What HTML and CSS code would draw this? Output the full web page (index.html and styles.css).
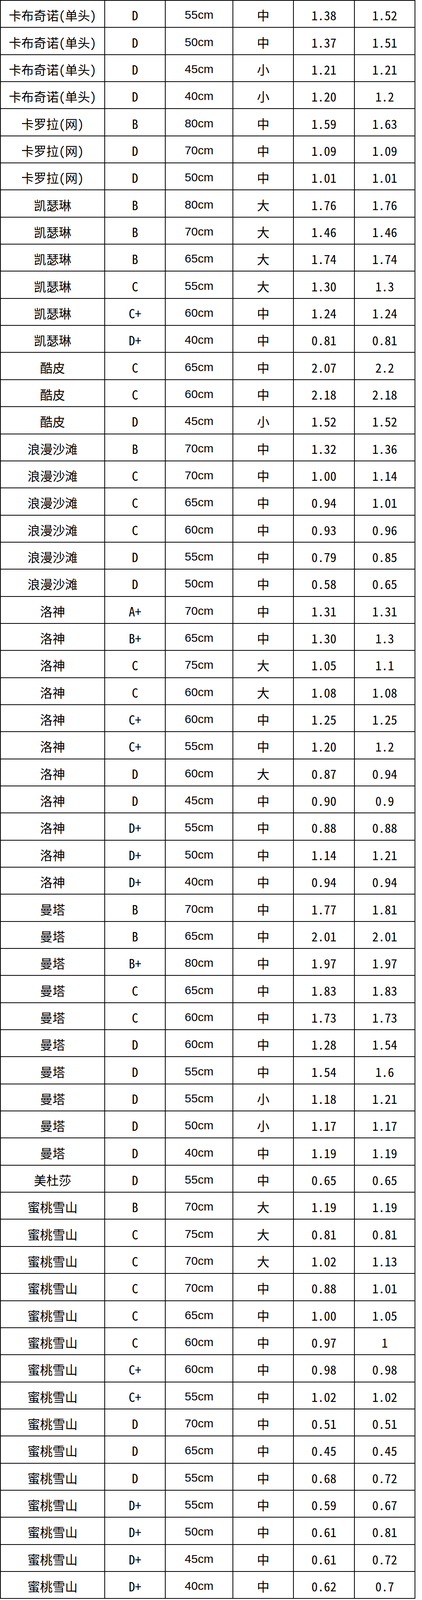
FILE: index.html
```html
<!DOCTYPE html>
<html lang="zh-CN">
<head>
<meta charset="utf-8">
<title>价格表</title>
<link rel="stylesheet" href="styles.css">
</head>
<body>
<div class="sheet" role="table">
<div class="cell">卡布奇诺(单头)</div><div class="cell">D</div><div class="cell len">55cm</div><div class="cell">中</div><div class="cell">1.38</div><div class="cell">1.52</div>
<div class="cell">卡布奇诺(单头)</div><div class="cell">D</div><div class="cell len">50cm</div><div class="cell">中</div><div class="cell">1.37</div><div class="cell">1.51</div>
<div class="cell">卡布奇诺(单头)</div><div class="cell">D</div><div class="cell len">45cm</div><div class="cell">小</div><div class="cell">1.21</div><div class="cell">1.21</div>
<div class="cell">卡布奇诺(单头)</div><div class="cell">D</div><div class="cell len">40cm</div><div class="cell">小</div><div class="cell">1.20</div><div class="cell">1.2</div>
<div class="cell">卡罗拉(网)</div><div class="cell">B</div><div class="cell len">80cm</div><div class="cell">中</div><div class="cell">1.59</div><div class="cell">1.63</div>
<div class="cell">卡罗拉(网)</div><div class="cell">D</div><div class="cell len">70cm</div><div class="cell">中</div><div class="cell">1.09</div><div class="cell">1.09</div>
<div class="cell">卡罗拉(网)</div><div class="cell">D</div><div class="cell len">50cm</div><div class="cell">中</div><div class="cell">1.01</div><div class="cell">1.01</div>
<div class="cell">凯瑟琳</div><div class="cell">B</div><div class="cell len">80cm</div><div class="cell">大</div><div class="cell">1.76</div><div class="cell">1.76</div>
<div class="cell">凯瑟琳</div><div class="cell">B</div><div class="cell len">70cm</div><div class="cell">大</div><div class="cell">1.46</div><div class="cell">1.46</div>
<div class="cell">凯瑟琳</div><div class="cell">B</div><div class="cell len">65cm</div><div class="cell">大</div><div class="cell">1.74</div><div class="cell">1.74</div>
<div class="cell">凯瑟琳</div><div class="cell">C</div><div class="cell len">55cm</div><div class="cell">大</div><div class="cell">1.30</div><div class="cell">1.3</div>
<div class="cell">凯瑟琳</div><div class="cell">C+</div><div class="cell len">60cm</div><div class="cell">中</div><div class="cell">1.24</div><div class="cell">1.24</div>
<div class="cell">凯瑟琳</div><div class="cell">D+</div><div class="cell len">40cm</div><div class="cell">中</div><div class="cell">0.81</div><div class="cell">0.81</div>
<div class="cell">酷皮</div><div class="cell">C</div><div class="cell len">65cm</div><div class="cell">中</div><div class="cell">2.07</div><div class="cell">2.2</div>
<div class="cell">酷皮</div><div class="cell">C</div><div class="cell len">60cm</div><div class="cell">中</div><div class="cell">2.18</div><div class="cell">2.18</div>
<div class="cell">酷皮</div><div class="cell">D</div><div class="cell len">45cm</div><div class="cell">小</div><div class="cell">1.52</div><div class="cell">1.52</div>
<div class="cell">浪漫沙滩</div><div class="cell">B</div><div class="cell len">70cm</div><div class="cell">中</div><div class="cell">1.32</div><div class="cell">1.36</div>
<div class="cell">浪漫沙滩</div><div class="cell">C</div><div class="cell len">70cm</div><div class="cell">中</div><div class="cell">1.00</div><div class="cell">1.14</div>
<div class="cell">浪漫沙滩</div><div class="cell">C</div><div class="cell len">65cm</div><div class="cell">中</div><div class="cell">0.94</div><div class="cell">1.01</div>
<div class="cell">浪漫沙滩</div><div class="cell">C</div><div class="cell len">60cm</div><div class="cell">中</div><div class="cell">0.93</div><div class="cell">0.96</div>
<div class="cell">浪漫沙滩</div><div class="cell">D</div><div class="cell len">55cm</div><div class="cell">中</div><div class="cell">0.79</div><div class="cell">0.85</div>
<div class="cell">浪漫沙滩</div><div class="cell">D</div><div class="cell len">50cm</div><div class="cell">中</div><div class="cell">0.58</div><div class="cell">0.65</div>
<div class="cell">洛神</div><div class="cell">A+</div><div class="cell len">70cm</div><div class="cell">中</div><div class="cell">1.31</div><div class="cell">1.31</div>
<div class="cell">洛神</div><div class="cell">B+</div><div class="cell len">65cm</div><div class="cell">中</div><div class="cell">1.30</div><div class="cell">1.3</div>
<div class="cell">洛神</div><div class="cell">C</div><div class="cell len">75cm</div><div class="cell">大</div><div class="cell">1.05</div><div class="cell">1.1</div>
<div class="cell">洛神</div><div class="cell">C</div><div class="cell len">60cm</div><div class="cell">大</div><div class="cell">1.08</div><div class="cell">1.08</div>
<div class="cell">洛神</div><div class="cell">C+</div><div class="cell len">60cm</div><div class="cell">中</div><div class="cell">1.25</div><div class="cell">1.25</div>
<div class="cell">洛神</div><div class="cell">C+</div><div class="cell len">55cm</div><div class="cell">中</div><div class="cell">1.20</div><div class="cell">1.2</div>
<div class="cell">洛神</div><div class="cell">D</div><div class="cell len">60cm</div><div class="cell">大</div><div class="cell">0.87</div><div class="cell">0.94</div>
<div class="cell">洛神</div><div class="cell">D</div><div class="cell len">45cm</div><div class="cell">中</div><div class="cell">0.90</div><div class="cell">0.9</div>
<div class="cell">洛神</div><div class="cell">D+</div><div class="cell len">55cm</div><div class="cell">中</div><div class="cell">0.88</div><div class="cell">0.88</div>
<div class="cell">洛神</div><div class="cell">D+</div><div class="cell len">50cm</div><div class="cell">中</div><div class="cell">1.14</div><div class="cell">1.21</div>
<div class="cell">洛神</div><div class="cell">D+</div><div class="cell len">40cm</div><div class="cell">中</div><div class="cell">0.94</div><div class="cell">0.94</div>
<div class="cell">曼塔</div><div class="cell">B</div><div class="cell len">70cm</div><div class="cell">中</div><div class="cell">1.77</div><div class="cell">1.81</div>
<div class="cell">曼塔</div><div class="cell">B</div><div class="cell len">65cm</div><div class="cell">中</div><div class="cell">2.01</div><div class="cell">2.01</div>
<div class="cell">曼塔</div><div class="cell">B+</div><div class="cell len">80cm</div><div class="cell">中</div><div class="cell">1.97</div><div class="cell">1.97</div>
<div class="cell">曼塔</div><div class="cell">C</div><div class="cell len">65cm</div><div class="cell">中</div><div class="cell">1.83</div><div class="cell">1.83</div>
<div class="cell">曼塔</div><div class="cell">C</div><div class="cell len">60cm</div><div class="cell">中</div><div class="cell">1.73</div><div class="cell">1.73</div>
<div class="cell">曼塔</div><div class="cell">D</div><div class="cell len">60cm</div><div class="cell">中</div><div class="cell">1.28</div><div class="cell">1.54</div>
<div class="cell">曼塔</div><div class="cell">D</div><div class="cell len">55cm</div><div class="cell">中</div><div class="cell">1.54</div><div class="cell">1.6</div>
<div class="cell">曼塔</div><div class="cell">D</div><div class="cell len">55cm</div><div class="cell">小</div><div class="cell">1.18</div><div class="cell">1.21</div>
<div class="cell">曼塔</div><div class="cell">D</div><div class="cell len">50cm</div><div class="cell">小</div><div class="cell">1.17</div><div class="cell">1.17</div>
<div class="cell">曼塔</div><div class="cell">D</div><div class="cell len">40cm</div><div class="cell">中</div><div class="cell">1.19</div><div class="cell">1.19</div>
<div class="cell">美杜莎</div><div class="cell">D</div><div class="cell len">55cm</div><div class="cell">中</div><div class="cell">0.65</div><div class="cell">0.65</div>
<div class="cell">蜜桃雪山</div><div class="cell">B</div><div class="cell len">70cm</div><div class="cell">大</div><div class="cell">1.19</div><div class="cell">1.19</div>
<div class="cell">蜜桃雪山</div><div class="cell">C</div><div class="cell len">75cm</div><div class="cell">大</div><div class="cell">0.81</div><div class="cell">0.81</div>
<div class="cell">蜜桃雪山</div><div class="cell">C</div><div class="cell len">70cm</div><div class="cell">大</div><div class="cell">1.02</div><div class="cell">1.13</div>
<div class="cell">蜜桃雪山</div><div class="cell">C</div><div class="cell len">70cm</div><div class="cell">中</div><div class="cell">0.88</div><div class="cell">1.01</div>
<div class="cell">蜜桃雪山</div><div class="cell">C</div><div class="cell len">65cm</div><div class="cell">中</div><div class="cell">1.00</div><div class="cell">1.05</div>
<div class="cell">蜜桃雪山</div><div class="cell">C</div><div class="cell len">60cm</div><div class="cell">中</div><div class="cell">0.97</div><div class="cell">1</div>
<div class="cell">蜜桃雪山</div><div class="cell">C+</div><div class="cell len">60cm</div><div class="cell">中</div><div class="cell">0.98</div><div class="cell">0.98</div>
<div class="cell">蜜桃雪山</div><div class="cell">C+</div><div class="cell len">55cm</div><div class="cell">中</div><div class="cell">1.02</div><div class="cell">1.02</div>
<div class="cell">蜜桃雪山</div><div class="cell">D</div><div class="cell len">70cm</div><div class="cell">中</div><div class="cell">0.51</div><div class="cell">0.51</div>
<div class="cell">蜜桃雪山</div><div class="cell">D</div><div class="cell len">65cm</div><div class="cell">中</div><div class="cell">0.45</div><div class="cell">0.45</div>
<div class="cell">蜜桃雪山</div><div class="cell">D</div><div class="cell len">55cm</div><div class="cell">中</div><div class="cell">0.68</div><div class="cell">0.72</div>
<div class="cell">蜜桃雪山</div><div class="cell">D+</div><div class="cell len">55cm</div><div class="cell">中</div><div class="cell">0.59</div><div class="cell">0.67</div>
<div class="cell">蜜桃雪山</div><div class="cell">D+</div><div class="cell len">50cm</div><div class="cell">中</div><div class="cell">0.61</div><div class="cell">0.81</div>
<div class="cell">蜜桃雪山</div><div class="cell">D+</div><div class="cell len">45cm</div><div class="cell">中</div><div class="cell">0.61</div><div class="cell">0.72</div>
<div class="cell">蜜桃雪山</div><div class="cell">D+</div><div class="cell len">40cm</div><div class="cell">中</div><div class="cell">0.62</div><div class="cell">0.7</div>
</div>
</body>
</html>
```
FILE: styles.css
```css
html, body {
  margin: 0;
  padding: 0;
  background: #ffffff;
}

.sheet {
  display: grid;
  grid-template-columns: 265px 153px 171px 153px 154px 153px;
  grid-auto-rows: min(73.9px, calc((100vh - 122px) / 59));
  gap: 2px;
  padding: 2px;
  width: max-content;
  background: #000000;
  font-family: "Noto Sans CJK SC", "Noto Sans", sans-serif;
  font-feature-settings: "hwid" 1;
  font-size: 32px;
  font-weight: 400;
  color: #000000;
}

.cell {
  display: flex;
  align-items: center;
  justify-content: center;
  background: #ffffff;
  padding-top: 5px;
  line-height: 32px;
  white-space: nowrap;
  overflow: hidden;
}

.len {
  font-family: "Liberation Sans", Arial, sans-serif;
  font-feature-settings: normal;
  font-size: 30px;
}
```
